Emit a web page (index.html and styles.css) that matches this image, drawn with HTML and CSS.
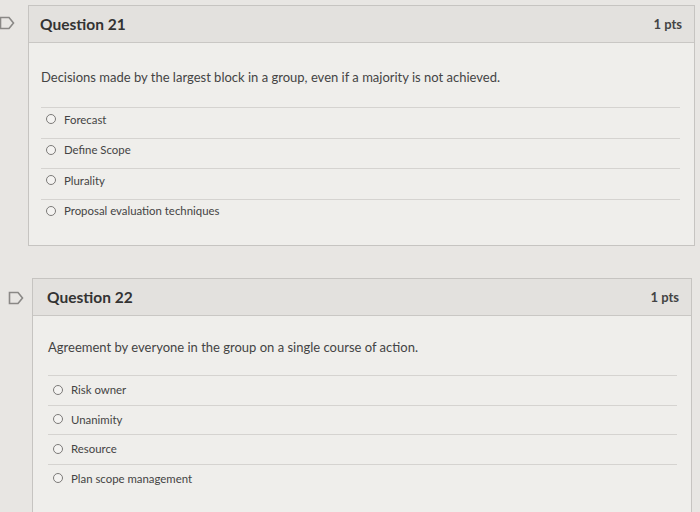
FILE: index.html
```html
<!DOCTYPE html>
<html>
	<head>
		<meta charset="UTF-8">
		<title>Quiz</title>
		<link rel="stylesheet" href="styles.css">
	</head>
	<body>
		<div class="quiz">
			<div class="question">
				<svg class="flag" width="16" height="14" viewBox="0 0 16 14"><path d="M1.5 1.5 H10 L14.5 7 L10 12.5 H1.5 Z" fill="none" stroke="#8a8886" stroke-width="1.6"/></svg>
				<div class="q_head">
					<span class="q_title">Question 21</span>
					<span class="q_pts">1 pts</span>
				</div>
				<div class="q_body">
					<p class="q_text">Decisions made by the largest block in a group, even if a majority is not achieved.</p>
					<ul class="answers">
						<li><span class="radio"></span>Forecast</li>
						<li><span class="radio"></span>Define Scope</li>
						<li><span class="radio"></span>Plurality</li>
						<li><span class="radio"></span>Proposal evaluation techniques</li>
					</ul>
				</div>
			</div>
			<div class="question second">
				<svg class="flag" width="16" height="14" viewBox="0 0 16 14"><path d="M1.5 1.5 H10 L14.5 7 L10 12.5 H1.5 Z" fill="none" stroke="#8a8886" stroke-width="1.6"/></svg>
				<div class="q_head">
					<span class="q_title">Question 22</span>
					<span class="q_pts">1 pts</span>
				</div>
				<div class="q_body">
					<p class="q_text">Agreement by everyone in the group on a single course of action.</p>
					<ul class="answers">
						<li><span class="radio"></span>Risk owner</li>
						<li><span class="radio"></span>Unanimity</li>
						<li><span class="radio"></span>Resource</li>
						<li><span class="radio"></span>Plan scope management</li>
					</ul>
				</div>
			</div>
		</div>
	</body>
</html>
```

FILE: styles.css
```css
* {
	margin: 0;
	padding: 0;
	box-sizing: border-box;
}
html, body {
	height: 100%;
}
body {
	background: #e8e6e3;
	font-family: Lato, "Liberation Sans", sans-serif;
	color: #3c3c3c;
	overflow: hidden;
}
ul {
	list-style: none;
}
.quiz {
	display: flex;
	flex-direction: column;
	gap: 32px;
	padding: 5px 5px 0 28px;
}
.question {
	position: relative;
	border: 1px solid #c6c4c1;
	background: #efeeeb;
}
.question.second {
	margin-left: 4px;
	margin-right: 3px;
}
.flag {
	position: absolute;
	left: -30px;
	top: 10px;
}
.second .flag {
	left: -25px;
	top: 12px;
}
.q_head {
	display: flex;
	justify-content: space-between;
	align-items: center;
	height: 37px;
	padding: 0 12px 0 11px;
	background: #e3e1de;
	border-bottom: 1px solid #c9c7c4;
}
.second .q_head {
	padding-left: 14px;
}
.q_title {
	font-size: 15.5px;
	font-weight: 700;
	color: #333;
}
.q_pts {
	font-size: 13px;
	font-weight: 700;
	color: #444;
}
.q_body {
	padding: 26px 14px 16px 12px;
}
.second .q_body {
	padding-left: 15px;
	padding-top: 23px;
	padding-bottom: 40px;
}
.q_text {
	font-size: 13px;
	line-height: 16px;
	color: #444;
	margin-bottom: 22px;
}
.second .q_text {
	margin-bottom: 20px;
}
.answers li {
	display: flex;
	align-items: center;
	height: 30.5px;
	padding: 0 0 7px 5px;
	border-top: 1px solid #d5d3d0;
	font-size: 11.4px;
	color: #444;
}
.second .answers li {
	height: 29.5px;
	padding-bottom: 1px;
}
.radio {
	width: 10px;
	height: 10px;
	border: 1px solid #7c7a78;
	border-radius: 50%;
	margin-right: 8px;
	background: #f4f3f1;
}
```
